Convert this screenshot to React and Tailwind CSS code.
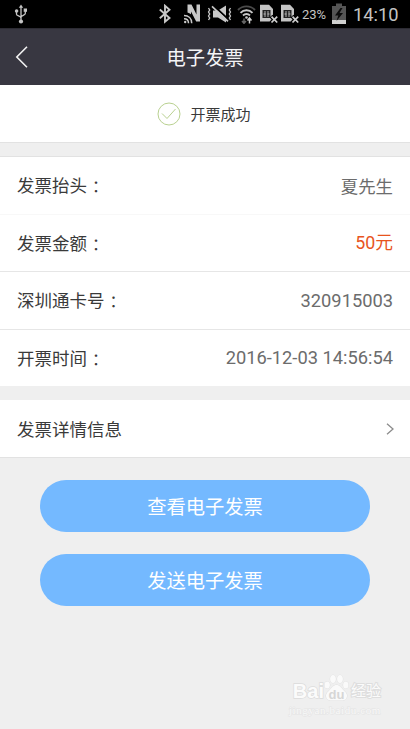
import React from 'react'

const rows = [
  { label: '发票抬头', value: '夏先生', style: 'pt-[3px] text-[17.4px] text-[#6c6c6c]' },
  { label: '发票金额', value: '50元', style: 'pt-[2px] text-[17.8px] text-[#e8541e]' },
  { label: '深圳通卡号', value: '320915003', style: 'text-[18.3px] text-[#6c6c6c]' },
  { label: '开票时间', value: '2016-12-03 14:56:54', style: 'text-[18.3px] text-[#6c6c6c]' },
]

const UsbIcon = () => (
  <svg className="ml-[14px] h-5 w-[14px]" viewBox="0 0 14 20" fill="none" stroke="#c4c4c4" strokeWidth="1.3">
    <path d="M7 3v14M2.500 7v3.200c0 1.800 4.500 1.600 4.500 4M11.300 6v3.400c0 2-4.300 1.800-4.300 4" />
    <path d="M7 .5 9.200 3.800H4.800z" fill="#c4c4c4" stroke="none" />
    <circle cx="7" cy="17.500" r="2.100" fill="#c4c4c4" stroke="none" />
    <circle cx="2.600" cy="7" r="1.800" fill="#c4c4c4" stroke="none" />
    <path d="M9.700 4.500h3.300v3.300H9.700z" fill="#c4c4c4" stroke="none" />
  </svg>
)

const BluetoothIcon = () => (
  <svg className="h-[20px] w-[12px]" viewBox="0 0 12 20" fill="none" stroke="#c8c8c8" strokeWidth="1.9">
    <path d="M.8 5.500 10.500 14 6 17.800V1.800L10.500 5.800.8 14.300" />
  </svg>
)

const NfcIcon = () => (
  <svg className="ml-[13px] h-5 w-[17px]" viewBox="0 0 17 20" fill="none" stroke="#c8c8c8">
    <path d="M3.500 8.500V.5h4l5 10V.5H16v17h-3.800L7 7.500v2.800a9 9 0 0 0-3.500-1.800z" fill="#c8c8c8" stroke="none" />
    <path d="M0 11.500c4.600 0 7.700 3 7.700 7.700M0 14.700c2.800 0 4.500 1.700 4.500 4.500" strokeWidth="1.500" />
    <circle cx="1.200" cy="18" r="1.200" fill="#c8c8c8" stroke="none" />
  </svg>
)

const MuteIcon = () => (
  <svg className="ml-[6px] h-5 w-[25px]" viewBox="0 0 25 20" fill="none" stroke="#c8c8c8">
    <path d="M6 6.500h5l8-5v17l-8-5H6z" fill="#c8c8c8" stroke="none" />
    <path d="M6.500 1.500 22 16" stroke="#000" strokeWidth="1.800" />
    <path d="M5 2.300 21 17.300" strokeWidth="1.600" />
    <path d="M1.500 4l1.200 2-1.200 2 1.200 2-1.200 2 1.200 2-1.200 2M23.500 4l-1.200 2 1.200 2-1.200 2 1.200 2-1.200 2 1.200 2" strokeWidth="1.300" />
  </svg>
)

const WifiIcon = () => (
  <svg className="ml-[5px] h-5 w-[19px]" viewBox="0 0 19 20" fill="none" strokeWidth="1.900">
    <path d="M1 6c4.700-4.800 12.300-4.800 17 0" stroke="#4a4a4a" />
    <path d="M3.500 8.800c3.300-3.500 8.700-3.500 12 0M6 11.500c2-2 5-2 7 0" stroke="#c8c8c8" />
    <circle cx="9.500" cy="13.500" r="1.300" fill="#c8c8c8" />
    <path d="M7 14.500v4M5 17l2 2.300 2-2.300" stroke="#666" strokeWidth="1.500" />
    <path d="M12.500 19.500v-5M10.500 16.500l2-2.500 2 2.500" stroke="#d0d0d0" strokeWidth="1.500" />
  </svg>
)

const SimIcon = ({ className }) => (
  <svg className={`h-5 w-[18px] ${className}`} viewBox="0 0 18 20" fill="none">
    <path d="M0 .8h9L13 5v12.500H0z" fill="#c4c4c4" />
    <path d="M2.500 6h8v8h-8z" fill="#222" />
    <path d="M5 7v6M8 7v6M3.500 10h2M7.500 10h2" stroke="#c4c4c4" strokeWidth=".9" />
    <path d="M11 12.200l6.500 6.600M17.500 12.200 11 18.800" stroke="#000" strokeWidth="4" />
    <path d="M11.500 12.700l5.700 5.800M17.200 12.700l-5.700 5.800" stroke="#d0d0d0" strokeWidth="1.700" />
  </svg>
)

const BatteryIcon = () => (
  <svg className="h-[22px] w-[14px]" viewBox="0 0 14 22">
    <path d="M4 .5h6V3h4v18H0V3h4z" fill="#555" />
    <path d="M0 17h14v4H0z" fill="#d0d0d0" />
    <path d="M8.500 5 3 12.500h3.300L4.500 18 11 10H7.500l3-5z" fill="#0c0c0c" />
  </svg>
)

const StatusBar = () => (
  <div className="flex h-7 items-center bg-black font-[Roboto,sans-serif] text-[#c4c4c4]">
    <UsbIcon />
    <div className="ml-[131px] flex items-center">
      <BluetoothIcon />
      <NfcIcon />
      <MuteIcon />
      <WifiIcon />
      <SimIcon className="ml-[4px]" />
      <SimIcon className="ml-[3px]" />
      <span className="ml-[3px] w-[30px] pt-[2px] text-[13px]">23%</span>
      <BatteryIcon />
      <span className="ml-[7px] pt-px text-[18.3px] leading-7">14:10</span>
    </div>
  </div>
)

const Header = () => (
  <header className="grid h-[57px] grid-cols-[1fr_auto_1fr] items-center border-t border-[#2c2b33] bg-[#383741]">
    <svg className="ml-[15px] h-[22px] w-[14px]" viewBox="0 0 14 22" fill="none" stroke="#f2f2f2" strokeWidth="1.6">
      <path d="M12 .8 1.800 11 12 21.200" />
    </svg>
    <h1 className="pt-[4px] text-[19.3px] text-[#f4f4f6]">电子发票</h1>
  </header>
)

const Watermark = () => (
  <div className="mt-auto mr-[29px] mb-[12px] flex flex-col items-end text-[#fbfbfb] [-webkit-text-stroke:1.5px_#dcdcdc] [paint-order:stroke_fill]">
    <div className="flex items-end">
      <span className="font-[Liberation_Sans,sans-serif] text-[20px] leading-[21px] font-bold">Bai</span>
      <svg className="h-[28px] w-[25px]" viewBox="0 0 25 28" fill="#fafafa" stroke="#dadada" strokeWidth=".8">
        <ellipse cx="3.200" cy="11" rx="2.700" ry="3.500" />
        <ellipse cx="9" cy="5" rx="2.900" ry="4" />
        <ellipse cx="16" cy="5" rx="2.900" ry="4" />
        <ellipse cx="21.800" cy="11" rx="2.700" ry="3.500" />
        <path d="M12.500 11c3 0 4.500 2.500 6.500 4.700s4 3.300 4 6c0 3.800-3 4.800-6 4.800h-9c-3 0-6-1-6-4.800 0-2.700 2-3.800 4-6s3.500-4.700 6.500-4.700z" />
        <text
          className="[-webkit-text-stroke:0]"
          x="12.500"
          y="24.500"
          textAnchor="middle"
          fontFamily="Liberation Sans"
          fontWeight="bold"
          fontSize="13"
          fill="#d6d6d6"
          stroke="none"
        >
          du
        </text>
      </svg>
      <span className="ml-[2px] text-[15px] leading-[21px] [-webkit-text-stroke:2px_#dedede]">经验</span>
    </div>
    <span className="mt-px font-[Liberation_Serif,serif] text-[11px] leading-[14px] tracking-[0.6px] text-[#f8f8f8] [-webkit-text-stroke:1px_#e4e4e4]">
      jingyan.baidu.com
    </span>
  </div>
)

export default function App() {
  return (
    <div className="flex h-[729px] w-[410px] flex-col overflow-hidden bg-[#efefef] font-[Roboto,Noto_Sans_CJK_SC,sans-serif]">
      <StatusBar />
      <Header />

      <div className="flex h-[58px] items-center justify-center border-b border-[#e2e2e2] bg-white">
        <svg className="mr-[9px] -ml-[2px] h-6 w-6" viewBox="0 0 24 24" fill="none" stroke="#b9d190" strokeWidth="1">
          <circle cx="12" cy="12" r="11" />
          <path d="M5 11.500l5 5L18.500 7" />
        </svg>
        <span className="pt-[3px] text-[15px] text-[#3a3a3a]">开票成功</span>
      </div>

      <div className="mt-[13px] flex h-[230px] flex-col border-t border-[#e2e2e2] bg-white">
        {rows.map((row, i) => (
          <div
            key={row.label}
            className={`flex flex-1 items-center justify-between px-[17px] ${i === 0 ? 'border-b border-[#f8f8f8]' : i < 3 ? 'border-b border-[#e6e6e6]' : ''}`}
          >
            <span className="flex pt-[2px] text-[17.5px] text-[#3a3a3a]">
              {row.label}
              <span className="ml-px pt-px font-[Noto_Sans_CJK_TC,sans-serif] text-[16px]" lang="zh-TW">：</span>
            </span>
            <span className={row.style}>{row.value}</span>
          </div>
        ))}
      </div>

      <div className="mt-[14px] flex h-[58px] items-center justify-between border-b border-[#e2e2e2] bg-white pr-[16px] pl-[17px]">
        <span className="pt-[3px] text-[17.5px] text-[#3a3a3a]">发票详情信息</span>
        <svg className="h-3 w-2" viewBox="0 0 8 12" fill="none" stroke="#8c8c8c" strokeWidth="1.300">
          <path d="M1 .8 7 6l-6 5.200" />
        </svg>
      </div>

      <div className="mt-[22px] flex flex-col gap-[22px] px-10">
        <button className="h-[52px] rounded-full bg-[#74b9ff] pt-[4px] text-[19.3px] text-white">查看电子发票</button>
        <button className="h-[52px] rounded-full bg-[#74b9ff] pt-[4px] text-[19.3px] text-white">发送电子发票</button>
      </div>

      <Watermark />
    </div>
  )
}
